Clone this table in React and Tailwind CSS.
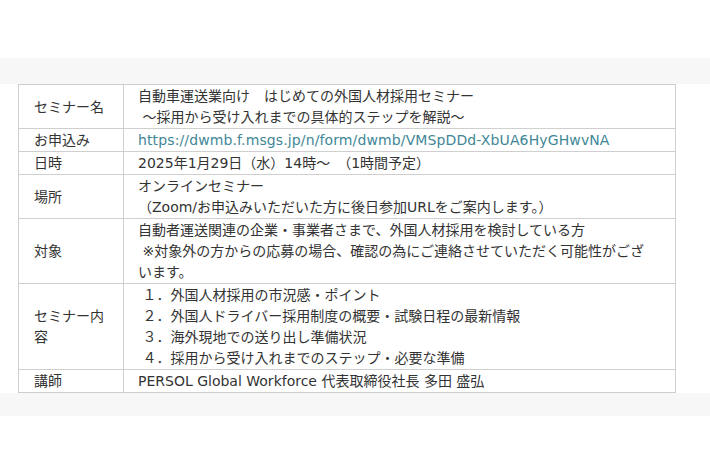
export default function App() {
  const font = { fontFamily: '"DejaVu Sans", "Noto Sans CJK JP", sans-serif' };
  const th = "border border-[#cfcfcf] pl-[15px] pr-2 pt-px align-middle text-left font-normal w-[105px]";
  const td = "border border-[#cfcfcf] pl-[14px] pr-2 pt-px align-middle whitespace-nowrap";
  return (
    <div className="w-[710px] h-[474px] bg-white pt-[58px]" style={font}>
      <div className="bg-[#f7f7f7] pt-[26px] pb-[23px]">
        <div className="bg-white pl-[18px] pr-[34px]">
          <table className="w-[658px] border-collapse text-[14px] leading-[21px] text-[#333]">
            <tbody>
              <tr>
                <td className={th}>セミナー名</td>
                <td className={td}>
                  自動車運送業向け　はじめての外国人材採用セミナー
                  <br />
                  {"\u00a0"}～採用から受け入れまでの具体的ステップを解説～
                </td>
              </tr>
              <tr>
                <td className={th}>お申込み</td>
                <td className={td}>
                  <span className="text-[#3f8797] tracking-[0.12px]">https://dwmb.f.msgs.jp/n/form/dwmb/VMSpDDd-XbUA6HyGHwvNA</span>
                </td>
              </tr>
              <tr>
                <td className={th}>日時</td>
                <td className={td}>2025年1月29日（水）14時～　（1時間予定）</td>
              </tr>
              <tr>
                <td className={th}>場所</td>
                <td className={td}>
                  オンラインセミナー
                  <br />
                  （Zoom/お申込みいただいた方に後日参加URLをご案内します。）
                </td>
              </tr>
              <tr>
                <td className={th}>対象</td>
                <td className={td}>
                  自動者運送関連の企業・事業者さまで、外国人材採用を検討している方
                  <br />
                  {"\u00a0"}※対象外の方からの応募の場合、確認の為にご連絡させていただく可能性がござ
                  <br />
                  います。
                </td>
              </tr>
              <tr>
                <td className={th}>
                  セミナー内
                  <br />
                  容
                </td>
                <td className={td}>
                  {"\u00a0"}１．外国人材採用の市況感・ポイント
                  <br />
                  {"\u00a0"}２．外国人ドライバー採用制度の概要・試験日程の最新情報
                  <br />
                  {"\u00a0"}３．海外現地での送り出し準備状況
                  <br />
                  {"\u00a0"}４．採用から受け入れまでのステップ・必要な準備
                </td>
              </tr>
              <tr>
                <td className={th}>講師</td>
                <td className={td}>PERSOL Global Workforce 代表取締役社長 多田 盛弘</td>
              </tr>
            </tbody>
          </table>
        </div>
      </div>
    </div>
  );
}
